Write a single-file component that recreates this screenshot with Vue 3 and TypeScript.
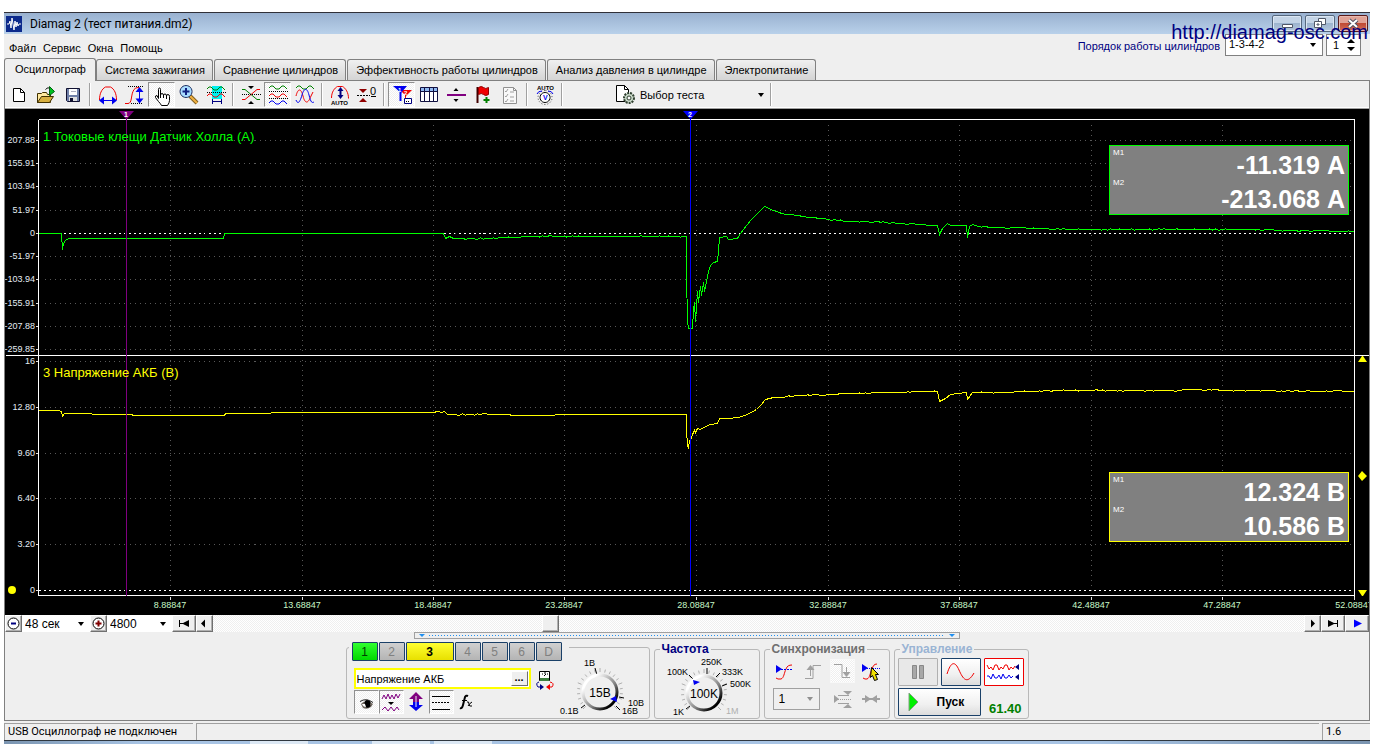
<script setup lang="ts">
import { h, ref } from 'vue'

interface Shape {
  d?: string
  s?: string
  f?: string
  w?: number
  dash?: string
  t?: string
  x?: number
  y?: number
  size?: number
}
interface Tool {
  name: string
  icon: Shape[]
  pressed?: boolean
}

const line = (d: string, s: string, dash?: string, w = 1): Shape => ({ d, s, f: 'none', dash, w })
const fill = (d: string, f: string, s = 'none'): Shape => ({ d, f, s })
const word = (t: string, x: number, y: number, size: number, f = '#000'): Shape => ({ t, x, y, size, f })

const RED = '#f00000'
const BLUE = '#0000f0'
const GREEN = '#008000'

const wave = (y: number) => `M3 ${y + 1}l2-2h2l3 3h3l3-3h2l3 3`

const fileTools: Tool[] = [
  { name: 'Новый', icon: [fill('M6.5 5.5h7l4 4v9h-11z', '#fff', '#000'), line('M13.5 5.5v4h4', '#000')] },
  {
    name: 'Открыть',
    icon: [
      fill('M3.5 19.5v-9h4l1-1h4l1 2h3v8z', '#ffe9a0', '#403000'),
      fill('M3.5 19.5l4-6h12l-4 6z', '#d8b040', '#403000'),
      line('M11.5 6.5c2-2 3-2 4-1', '#000'),
      fill('M15.5 3.5l5 5-5 4z', '#00c020', '#006010'),
    ],
  },
  {
    name: 'Сохранить',
    icon: [fill('M5.5 5.5h13v13h-12l-1-1z', '#7080a8', '#101030'), fill('M8 6h8v6H8z', '#fff'), fill('M8 14h8v4H8z', '#e0e0e0'), fill('M9 15h3v3H9z', '#101030'), line('M10 8.5h5', '#b0b0c0')],
  },
]
const viewTools: Tool[] = [
  { name: 'Растянуть по горизонтали', icon: [line('M3.5 17c0-6 2-11 6-13h5c4 2 6 7 6 13', RED), line('M5 17.5h14', BLUE), fill('M3 17.5l5-4v8zM21 17.5l-5-4v8z', BLUE)] },
  { name: 'Растянуть по вертикали', icon: [line('M5 3.5h16', '#000', '1 1'), line('M8 20.5h12', '#000', '1 1'), line('M2 20.5h3c4 0 3-8 5-12 1-3 3-4 6-4', RED), line('M16.5 5v14', BLUE), fill('M16.5 4l4 5h-8zM16.5 20.5l4-5h-8z', BLUE)] },
  {
    name: 'Рука',
    pressed: true,
    icon: [fill('M8.5 15.5v-9q0-1.500 1-1.500t1 1.500v6q0-2 1.500-2t1.500 2q0-1.500 1.500-1.500t1.500 2q0-1.500 1.500-1.500t1.500 2v4q0 2-2 5h-6q-1-2-3-4l-3-4q-.5-2 1.500-2z', '#fff', '#000'), line('M10.500 12v3M13.500 12v3M16.500 13v3', '#000')],
  },
  { name: 'Лупа', icon: [line('M13 13l7 7', '#806020', undefined, 4), line('M13 13l7 7', '#f0b040', undefined, 2), fill('M9 2.500a6 6 0 1 0 .1 0z', '#a8dcff', '#203060'), line('M9 5v7M5.500 8.500h7', '#102080', undefined, 2)] },
  {
    name: 'Интервал',
    icon: [fill('M8 3h10v13H8z', '#00f0f0'), line(wave(5), GREEN), line('M3 9.500h19', '#000', '1 1'), line(wave(12), RED), line('M8.500 16v5M17.500 16v5M8.500 18.500h9', '#000080')],
  },
]
const traceTools: Tool[] = [
  { name: 'Совместить', icon: [fill('M9 3h6l-3 3zM9 21h6l-3-3z', '#000'), line('M3 6.500h3l12 10h3', GREEN), line('M3 16.500h3l12-10h3', RED), line('M3 11.500h19', '#000', '1 1')] },
  {
    name: 'Разделить',
    pressed: true,
    icon: [line(wave(4), GREEN), line('M3 8.500h19', '#000', '1 1'), line(wave(12), RED), line('M3 15.500h19', '#000', '1 1'), line(wave(19), BLUE)],
  },
  { name: 'Наложить', icon: [line(wave(4), GREEN), line('M3 13c2-8 5-8 7 0s5 8 8 0l2-4', RED), line('M3 17c2 5 4 2 6-5s5-8 7 0 3 8 5 7', BLUE)] },
]
const autoTools: Tool[] = [
  { name: 'Автомасштаб', icon: [line('M3.500 15c0-6 3-10 6-11.500h5c3 1.500 6 6 6 12', RED), line('M12.500 6v8', '#000080', undefined, 2), fill('M12.500 4l3 4h-6zM12.500 16l3-4h-6z', '#000080'), word('AUTO', 3, 22, 6)] },
  { name: 'Обнуление', icon: [fill('M4 6h8l-4 4zM4 19h8l-4-4z', '#900000'), line('M2 12.500h13', '#000', '2 1'), word('0', 15, 12, 11), line('M16 13.500h5', '#000')] },
]
const markerTools: Tool[] = [
  {
    name: 'Маркеры',
    pressed: true,
    icon: [fill('M10 7h12l-6 6z', RED), line('M15.500 12v8', RED), fill('M3 3h14l-6 7z', BLUE), line('M10.500 9v9', BLUE, undefined, 2), word('1', 8, 9, 6, '#fff'), word('2', 14, 12, 6, '#fff'), fill('M14.500 15.500h7v5h-7z', '#fff', '#000080'), line('M16 18.500h4', '#000', '1 1')],
  },
  { name: 'Таблица', icon: [fill('M3.500 4.500h17v14h-17z', '#fff', '#101040'), fill('M4 5h16v3H4z', '#90b8f0'), line('M3.500 8.500h17M7.500 5v13M12.500 5v13M16.500 5v13', '#101040')] },
  { name: 'Разделитель', icon: [line('M3 12h19', '#800080', undefined, 2), fill('M9.500 8h5l-2.500-3zM9.500 16h5l-2.500 3z', '#000')] },
  { name: 'Флаг', icon: [line('M6.500 4v16', '#400000', undefined, 2), fill('M7.500 4.500q3-2 5 0t5 0v7q-3 2-5 0t-5 0z', RED, '#900000'), line('M15.500 14v6M12.500 17h6', GREEN, undefined, 2)] },
  { name: 'Протокол', icon: [fill('M5.500 4.500h10l3 3v13h-13z', '#f8f8f8', '#909090'), line('M15.500 4.500v3h3', '#909090'), line('M7 8l1 1 2-3M7 13l1 1 2-3M7 18l1 1 2-3M12 9h4M12 14h4M12 18h4', '#a0a0a0')] },
]
const voltTools: Tool[] = [
  { name: 'Авто напряжение', icon: [word('AUTO', 4, 7, 6), fill('M12 9.500a5 5 0 1 0 .1 0z', '#fff', '#000'), line('M12 7.500a7 7 0 1 0 .1 0z', '#404040', '1 2'), line('M4 11q1-3 5-3M20 11q-1-3-5-3', BLUE), word('V', 10, 17, 7, BLUE)] },
]
const toolGroups: Tool[][] = [fileTools, viewTools, traceTools, autoTools, markerTools, voltTools]

const tabs = ['Осциллограф', 'Система зажигания', 'Сравнение цилиндров', 'Эффективность работы цилиндров', 'Анализ давления в цилиндре', 'Электропитание']
const activeTab = ref('Осциллограф')

const xTicks = [170, 302, 433, 564, 696, 828, 959, 1091, 1222, 1354].map((x, i) => ({
  x,
  label: (8.88847 + 4.8 * i).toFixed(5),
}))
const currentTicks = [140, 163, 186, 210, 233, 256, 279, 303, 326, 349].map((y, i) => ({
  y,
  label: i === 4 ? '0' : (51.97 * (4 - i)).toFixed(2),
}))
const voltageTicks = [361, 407, 453, 498, 544, 590].map((y, i) => ({
  y,
  label: i === 0 ? '16' : i === 5 ? '0' : (16 - 3.2 * i).toFixed(2),
}))
const yTicks = [...currentTicks, ...voltageTicks]

/* Fills long spans with one-pixel sampling noise, as a digitised signal shows. */
function sampled(source: number[][], noisyFrom: number[][]): string {
  const out: string[] = []
  let seed = 7
  source.forEach(([x, y], i) => {
    out.push(`${x},${y}`)
    const next = source[i + 1]
    if (!next) return
    if (!noisyFrom.some(([a, b]) => x >= a && next[0] <= b)) return
    for (let px = x + 3; px < next[0] - 1; px += 3) {
      seed = (seed * 1103515245 + 12345) % 2147483648
      const base = y + ((next[1] - y) * (px - x)) / (next[0] - x)
      out.push(`${px},${(base + (seed / 2147483648 - 0.5) * 1.4).toFixed(1)}`)
    }
  })
  return out.join(' ')
}
const currentTrace = sampled(
  [[38, 233], [61, 233], [62, 249], [63, 243], [65, 240], [68, 238], [223, 238], [224, 233], [443, 233], [445, 238], [449, 236], [453, 238], [490, 238], [530, 236], [686, 236], [686, 275], [687, 320], [688, 328], [692, 328], [693, 310], [694, 302], [695, 321], [697, 291], [698, 302], [700, 286], [701, 295], [703, 282], [704, 291], [706, 281], [708, 271], [710, 265], [713, 262], [717, 261], [718, 250], [719, 237], [726, 236], [728, 239], [737, 238], [740, 233], [750, 220], [764, 206], [773, 210], [781, 213], [801, 216], [828, 219], [850, 221], [886, 222], [937, 225], [939, 234], [942, 228], [947, 223], [950, 225], [966, 225], [967, 237], [969, 226], [972, 224], [978, 226], [1000, 227], [1080, 229], [1222, 229], [1354, 231]],
  [[449, 686], [773, 937], [978, 1354]],
)
const voltageTrace = sampled(
  [[38, 410], [58, 410], [61, 411], [62, 416], [64, 413], [91, 413], [92, 414], [130, 414], [134, 415], [224, 415], [225, 413], [270, 413], [271, 412], [430, 412], [444, 411], [447, 414], [490, 414], [530, 415], [580, 414], [686, 414], [686, 430], [687, 445], [688, 447], [689, 441], [691, 437], [692, 434], [694, 430], [695, 432], [697, 428], [700, 429], [703, 427], [710, 424], [717, 423], [719, 418], [727, 418], [738, 417], [747, 414], [756, 409], [760, 405], [765, 399], [773, 397], [801, 395], [828, 394], [850, 393], [886, 392], [937, 391], [939, 401], [945, 398], [950, 394], [966, 392], [967, 399], [972, 392], [1000, 392], [1060, 390], [1180, 390], [1187, 389], [1230, 390], [1354, 391]],
  [[430, 490], [773, 937], [972, 1354]],
)

const readouts = [
  { y: 145, color: '#00ff00', m1: '-11.319 А', m2: '-213.068 А' },
  { y: 472, color: '#ffff00', m1: '12.324 В', m2: '10.586 В' },
]

const thumbShare = 30.2
const channels = ['1', '2', '3', '4', '5', '6', 'D']
const channelName = ref('Напряжение АКБ')

const channelTools: Tool[] = [
  { name: 'Показать', pressed: true, icon: [fill('M7 14q3-4 9-2l3 2-2 3q-4 3-8 1z', '#706860'), fill('M11 14.500a3 2 0 1 0 5 0 3 3 0 1 0-5 0z', '#000'), fill('M8 14q1 3 4 3l-1-3z', '#fff'), line('M6 11.500q6-4 13 1', '#202020')] },
  { name: 'Сглаживание', pressed: true, icon: [line('M3 9l2-4 2 4 2-5 2 5 2-4 2 4 2-5 2 4 2-4', '#800080'), fill('M9 12h6l-3 3z', '#000'), line('M3 20l3-3 3 4 3-4 3 4 3-4 2 3', '#800080')] },
  { name: 'Сдвиг', icon: [fill('M12 2l7 7h-4v3H9V9H5z', '#800080'), fill('M12 21l7-6h-4v-3H9v3H5z', BLUE), line('M12 6v11', '#efefef')] },
  { name: 'Линии', pressed: true, icon: [line('M3 6.500h18M3 19.500h18', '#000'), line('M3 12.500h18', '#000', '2 1')] },
  { name: 'Функция', icon: [line('M6 18q2 1 3-3l2-8q1-2 3-1', '#000', undefined, 2), line('M8 10.500h5', '#000'), line('M13 12q2-1 2 2t3 2M18 12q-2 1-4 4', '#000')] },
]
const probeIcon: Shape[] = [fill('M6.500 3.500h10v9h-10z', '#fff', '#000'), line('M9 6h1M11 5h2M14 6h1M11 8l2-2', '#000'), fill('M7 10h9v3H7z', '#408040'), line('M6 14q-4 1-1 5h3', '#000080'), fill('M7 16l4 3-4 3z', '#000080'), line('M17 14q5 1 2 5h-3', RED), fill('M17 16l-4 3 4 3z', RED)]
const syncTools: Tool[] = [
  { name: 'Уровень', icon: [line('M4 19l2 1h3c3-1 3-6 5-10 1-3 3-4 6-4', RED), fill('M4 6l6 4-6 4z', BLUE), line('M9 10.500h12', BLUE, '2 1')] },
  { name: 'Фронт', icon: [line('M4 19.500h8v-13h8', '#a0a0a0'), line('M9.500 9v8', '#a0a0a0'), fill('M9.500 6l4 5h-8z', '#a0a0a0')] },
  { name: 'Спад', pressed: true, icon: [line('M4 5.500h8v13h8', '#a0a0a0'), line('M16.500 8v8', '#a0a0a0'), fill('M16.500 18l4-5h-8z', '#a0a0a0')] },
  { name: 'Ручной уровень', icon: [line('M4 19l2 1h2c3-1 3-6 5-10 1-3 2-5 5-5', RED), fill('M3 5l6 4-6 4z', BLUE), line('M8 9.500h13', BLUE, '1 1'), fill('M12.500 8.500l7 7h-3l2 5-3 1-2-5-2 2z', '#f0e000', '#000')] },
]
const syncExtras: Tool[] = [
  { name: 'Диапазон', icon: [fill('M4 8l5 4-5 4zM13 4h9l-4 4zM13 21h9l-4-4z', '#a0a0a0'), line('M8 8.500h11M8 16.500h11', '#a0a0a0'), line('M8 12.500h13', '#a0a0a0', '1 1')] },
  { name: 'Сжать', icon: [line('M3 12h18', '#a0a0a0', undefined, 2), fill('M6 8l6 4-6 4zM18 8l-6 4 6 4z', '#a0a0a0')] },
]
const sineIcon: Shape[] = [line('M3 14C7 1 11 1 15 10s8 15 15 3', RED)]
const multiIcon: Shape[] = [line('M0 5l2 4 2-2 2 3 2-5h2l2 5 2-3 2 2 2-4h2l2 5 2-3 2 2 2-3', RED), line('M0 16h2l2 3 2-5 2 4h2l2-3 2 4 2-5 2 4h2l2-3 2 3 2-2', BLUE), fill('M28 7l4-3v6zM28 17l4-3v6z', '#000080')]

const ring = (cx: number, cy: number) =>
  Array.from({ length: 21 }, (_, i) => {
    const a = ((135 + i * 13.5) * Math.PI) / 180
    const p = (r: number) => `${(cx + r * Math.cos(a)).toFixed(1)} ${(cy + r * Math.sin(a)).toFixed(1)}`
    return `M${p(20)}L${p(i % 5 ? 23 : 24)}`
  }).join('')

interface Dial {
  title: string
  box: string
  cx: number
  value: string
  pointer: string
  strong: string
  labels: { t: string; x: number; y: number; dim?: boolean }[]
}
const voltageDial: Dial = {
  title: 'Диапазон',
  box: '559 655 88 62',
  cx: 600,
  value: '15В',
  pointer: 'M610 699l6-3 1 6z',
  strong: 'M595 668l2 7M581 708l4-3M616 706l4 4M619 697l5 1',
  labels: [
    { t: '1В', x: 584, y: 666 },
    { t: '0.1В', x: 560, y: 714 },
    { t: '10В', x: 628, y: 706 },
    { t: '16В', x: 622, y: 714 },
  ],
}
const rateDial: Dial = {
  title: 'Частота',
  box: '658 655 95 62',
  cx: 704,
  value: '100K',
  pointer: 'M693 679l1 5 6-3z',
  strong: 'M707 667v6M689 674l4 4M716 676l4-4M722 685l5-2M686 708l4-3',
  labels: [
    { t: '250K', x: 701, y: 664 },
    { t: '100K', x: 667, y: 674 },
    { t: '333K', x: 722, y: 674 },
    { t: '500K', x: 730, y: 686 },
    { t: '1K', x: 673, y: 714 },
    { t: '1M', x: 726, y: 713, dim: true },
  ],
}

const Icon = (props: { shapes: Shape[]; w?: number; h?: number }) =>
  h(
    'svg',
    { width: props.w ?? 24, height: props.h ?? 24, viewBox: `0 0 ${props.w ?? 24} ${props.h ?? 24}`, 'aria-hidden': 'true', class: 'glyph' },
    props.shapes.map((s) =>
      s.t
        ? h('text', { x: s.x, y: s.y, 'font-size': s.size, fill: s.f, 'font-weight': (s.size ?? 0) < 9 ? 700 : 400 }, s.t)
        : h('path', { d: s.d, fill: s.f, stroke: s.s, 'stroke-width': s.w ?? 1, 'stroke-dasharray': s.dash }),
    ),
  )
Icon.props = ['shapes', 'w', 'h']

const DialFace = (props: { dial: Dial }) => {
  const { dial } = props
  const [, , w, hgt] = dial.box.split(' ')
  const id = `knob-${dial.cx}`
  return h('svg', { viewBox: dial.box, width: w, height: hgt, role: 'img', 'aria-label': dial.title, class: 'dial' }, [
    h('defs', [
      h('linearGradient', { id, x1: 0, y1: 0, x2: 1, y2: 1 }, [
        h('stop', { offset: '0.2', 'stop-color': '#ffffff' }),
        h('stop', { offset: '0.6', 'stop-color': '#808080' }),
        h('stop', { offset: '0.85', 'stop-color': '#000000' }),
      ]),
    ]),
    h('path', { d: ring(dial.cx, 692), stroke: '#b0b0b0' }),
    h('path', { d: dial.strong, stroke: '#000' }),
    h('circle', { cx: dial.cx, cy: 692, r: 17, fill: '#efefef', stroke: `url(#${id})`, 'stroke-width': 3 }),
    h('path', { d: dial.pointer, fill: '#0000f0' }),
    h('text', { x: dial.cx, y: 697, 'font-size': 12, 'text-anchor': 'middle' }, dial.value),
    ...dial.labels.map((l) => h('text', { x: l.x, y: l.y, 'font-size': 9, fill: l.dim ? '#b0b0b0' : '#000' }, l.t)),
  ])
}
DialFace.props = ['dial']
</script>

<template>
  <div class="page">
    <div class="window">
      <a class="site" href="http://diamag-osc.com">http://diamag-osc.com</a>
      <header class="title">
        <svg class="logo" width="16" height="16" viewBox="0 0 16 16" aria-hidden="true">
          <path d="M0 0h16v16H0z" fill="#0c2a8c" />
          <path d="M1 8h2l1-3 1 7 1-10 2 12 1-9 1 6 1-5 1 4 1-2h2" fill="none" stroke="#fff" />
        </svg>
        <h1>Diamag 2 (тест питания.dm2)</h1>
        <button class="cap" aria-label="Свернуть"><svg width="28" height="15" viewBox="0 0 28 15"><path d="M9.500 8.500h10v3h-10z" fill="#fff" stroke="#505868" /></svg></button>
        <button class="cap" aria-label="Восстановить"><svg width="28" height="15" viewBox="0 0 28 15"><path d="M12.500 2.500h7v6h-7z" fill="#fff" stroke="#505868" /><path d="M8.500 5.500h7v6h-7zM11 8h2v1h-2z" fill="#fff" stroke="#505868" /></svg></button>
        <button class="cap close" aria-label="Закрыть"><svg width="28" height="15" viewBox="0 0 28 15"><path d="M10 4l8 7M18 4l-8 7" stroke="#505060" stroke-width="4" /><path d="M10 4l8 7M18 4l-8 7" stroke="#fff" stroke-width="2" /></svg></button>
      </header>

      <div class="menubar">
        <nav class="menu">
          <button>Файл</button><button>Сервис</button><button>Окна</button><button>Помощь</button>
        </nav>
        <label class="order" for="order">Порядок работы цилиндров</label>
        <span class="drop orderdrop"><select id="order"><option>1-3-4-2</option></select></span>
        <span class="spin">
          <input id="cyl" type="text" value="1" aria-label="Цилиндр" />
          <svg width="10" height="14" viewBox="0 0 10 14" aria-hidden="true"><path d="M1 5h8L5 1zM1 9h8l-4 4z" /></svg>
        </span>
      </div>

      <div class="tabs" role="tablist">
        <button v-for="t in tabs" :key="t" role="tab" :aria-selected="t === activeTab" :class="{ on: t === activeTab }" @click="activeTab = t">{{ t }}</button>
      </div>

      <main class="body">
        <div class="toolbar">
          <div v-for="(g, i) in toolGroups" :key="i" class="group">
            <button v-for="b in g" :key="b.name" class="tool" :class="{ pressed: b.pressed }" :aria-label="b.name"><Icon :shapes="b.icon" /></button>
          </div>
          <span class="test">
            <svg width="22" height="22" viewBox="0 0 22 22" aria-hidden="true">
              <path d="M2.500 1.500h8l4 4v12h-12z" fill="#fff" stroke="#000" />
              <path d="M10.500 1.500v4h4" fill="none" stroke="#000" />
              <circle cx="15" cy="14" r="5" fill="#c8d8c8" stroke="#304030" stroke-width="2" stroke-dasharray="2 1" />
              <circle cx="15" cy="14" r="2" fill="#fff" stroke="#304030" />
            </svg>
            <span class="drop testdrop"><select aria-label="Выбор теста"><option>Выбор теста</option></select></span>
          </span>
        </div>

        <svg class="scope" viewBox="5 109 1364 506" role="img" aria-label="Осциллограмма">
          <path d="M5 109h1364v506H5z" fill="#000" />
          <g class="crisp" transform="translate(.5 .5)">
            <path v-for="t in yTicks" :key="t.y" :d="`M44 ${t.y}H1352`" stroke="#585858" stroke-dasharray="1 4" />
            <path v-for="t in xTicks.slice(0, 9)" :key="t.x" :d="`M${t.x} 124V594`" stroke="#585858" stroke-dasharray="1 4" />
          </g>
          <g class="crisp" fill="none" transform="translate(.5 .5)">
            <path :d="'M38 233H1354M38 590H1354'" stroke="#fff" stroke-dasharray="2 3" />
            <path :d="yTicks.map((t) => `M35 ${t.y}h3`).join('') + xTicks.map((t) => `M${t.x} 596v3`).join('')" stroke="#e0e0e0" />
            <polyline :points="currentTrace" stroke="#00ff00" />
            <polyline :points="voltageTrace" stroke="#ffff00" />
            <path d="M38 119V595M1354 119V596M38 119H1354M5 355H1369M38 595H1354" stroke="#fff" />
            <path d="M126 112V595" stroke="#800080" />
            <path d="M690 112V595" stroke="#0000ff" />
          </g>
          <path d="M119 111h15l-7 8h-1z" fill="#800080" />
          <path d="M683 111h15l-7 8h-1z" fill="#0000ff" />
          <g class="mark"><text x="124" y="117">1</text><text x="688" y="117">2</text></g>
          <g class="ylab"><text v-for="t in yTicks" :key="t.y" x="35" :y="t.y + 3">{{ t.label }}</text></g>
          <g class="xlab"><text v-for="t in xTicks" :key="t.x" :x="t.x" y="608">{{ t.label }}</text></g>
          <text class="chan" x="43" y="141" fill="#00ff00">1 Токовые клещи Датчик Холла (А)</text>
          <text class="chan" x="43" y="377" fill="#ffff00">3 Напряжение АКБ (В)</text>
          <g v-for="r in readouts" :key="r.y">
            <rect class="crisp" x="1109" :y="r.y" width="240" height="70" :fill="r.color" />
            <rect class="crisp" x="1110" :y="r.y + 1" width="238" height="68" fill="#808080" />
            <text class="m" x="1113" :y="r.y + 10">M1</text>
            <text class="m" x="1113" :y="r.y + 40">M2</text>
            <text class="val" x="1345" :y="r.y + 29">{{ r.m1 }}</text>
            <text class="val" x="1345" :y="r.y + 63">{{ r.m2 }}</text>
          </g>
          <path d="M1358 362h9l-4-6h-1zM1362 471l5 5-5 5-4-5zM1358 590h9l-4 6h-1z" fill="#ffff00" />
          <circle cx="12" cy="590" r="4" fill="#ffff00" />
        </svg>

        <div class="scroll">
          <button class="sq" aria-label="Уменьшить"><svg width="15" height="15" viewBox="0 0 15 15"><circle cx="7.500" cy="7.500" r="5.500" fill="#fff" stroke="#000" /><path d="M5 7.500h5" stroke="#000080" stroke-width="2" /></svg></button>
          <span class="drop time"><select aria-label="Время"><option>48 сек</option></select></span>
          <button class="sq" aria-label="Увеличить"><svg width="15" height="15" viewBox="0 0 15 15"><circle cx="7.500" cy="7.500" r="5.500" fill="#fff" stroke="#000" /><path d="M4.500 7.500h6M7.500 4.500v6" stroke="#800000" stroke-width="2" /></svg></button>
          <span class="drop count"><select aria-label="Точек"><option>4800</option></select></span>
          <button class="wide" aria-label="В начало"><svg width="21" height="15" viewBox="0 0 21 15"><path d="M5 4h1v7H5zM6 7h3l6-3v7l-6-3H6z" /></svg></button>
          <button class="sq" aria-label="Назад"><svg width="15" height="15" viewBox="0 0 15 15"><path d="M4 7.500l4-4v8z" /></svg></button>
          <div class="track"><div class="thumb" :style="{ marginLeft: thumbShare + '%' }"></div></div>
          <button class="sq" aria-label="Вперёд"><svg width="15" height="15" viewBox="0 0 15 15"><path d="M10 7.500l-4-4v8z" /></svg></button>
          <button class="wide" aria-label="В конец"><svg width="21" height="15" viewBox="0 0 21 15"><path d="M14 4h1v7h-1zM14 8h-3l-6 3V4l6 3h3z" /></svg></button>
          <button class="wide" aria-label="Воспроизвести"><svg width="21" height="15" viewBox="0 0 21 15"><path d="M15 7.500l-8-4v8z" fill="#0000ff" /></svg></button>
        </div>

        <div class="splitter"><i></i><b></b><i></i></div>

        <div class="panels">
          <section class="panel channel" aria-label="Канал">
            <div class="chans">
              <button v-for="c in channels" :key="c" :class="{ green: c === '1', yellow: c === '3' }">{{ c }}</button>
            </div>
            <div class="left">
              <div class="namerow">
                <span class="namebox"><input id="name" v-model="channelName" type="text" aria-label="Имя канала" /><button aria-label="Выбрать">...</button></span>
                <Icon :shapes="probeIcon" />
              </div>
              <div class="group">
                <button v-for="b in channelTools" :key="b.name" class="tool small" :class="{ pressed: b.pressed }" :aria-label="b.name"><Icon :shapes="b.icon" /></button>
              </div>
            </div>
            <DialFace :dial="voltageDial" class="vdial" />
          </section>

          <fieldset class="panel rate"><legend>Частота</legend><DialFace :dial="rateDial" /></fieldset>

          <fieldset class="panel sync">
            <legend>Синхронизация</legend>
            <div class="syncrow"><button v-for="b in syncTools" :key="b.name" class="tool" :class="{ pressed: b.pressed }" :aria-label="b.name"><Icon :shapes="b.icon" /></button></div>
            <div class="syncrow second">
              <span class="drop one"><select aria-label="Канал синхронизации"><option>1</option></select></span>
              <button v-for="b in syncExtras" :key="b.name" class="tool" :aria-label="b.name"><Icon :shapes="b.icon" /></button>
            </div>
          </fieldset>

          <fieldset class="panel control">
            <legend>Управление</legend>
            <div class="ctl">
              <button class="big off" aria-label="Пауза"><svg width="14" height="16" viewBox="0 0 14 16"><path d="M1.500 1.500h4v13h-4zM8.500 1.500h4v13h-4z" fill="#a8a8a8" stroke="#888" /></svg></button>
              <button class="big" aria-label="Синус"><Icon :shapes="sineIcon" :w="33" /></button>
              <button class="big red" aria-label="Все каналы"><Icon :shapes="multiIcon" :w="33" /></button>
              <button class="start"><svg width="11" height="20" viewBox="0 0 11 20" aria-hidden="true"><path d="M1 1l9 9-9 9z" fill="#00f000" stroke="#80a080" /></svg>Пуск</button>
              <output>61.40</output>
            </div>
          </fieldset>
        </div>
      </main>

      <footer class="status"><span class="s1">USB Осциллограф не подключен</span><span class="s2"></span><span class="s3">1.6</span></footer>
      <div class="task"><span></span><span></span><span></span></div>
    </div>
  </div>
</template>

<style>
body { margin: 0; background: #fff; }
</style>

<style scoped>
.page { box-sizing: border-box; padding: 12px 12px 0 4px; font: 11px/14px "Liberation Sans", Arial, sans-serif; color: #000; }
.window { position: relative; background: #efefef; border-top: 1px solid #303038; }
button, input, select { font: inherit; color: inherit; margin: 0; padding: 0; border: 0; border-radius: 0; background: none; box-sizing: border-box; }
.glyph, .dial { display: block; overflow: visible; }
.site { position: absolute; top: 7px; right: 2px; z-index: 2; font-size: 20px; line-height: 24px; color: #000080; text-decoration: none; }
.title { display: flex; align-items: center; gap: 3px; height: 21px; padding: 0 2px; background: linear-gradient(#99b1d0, #b9d1ea); }
.title h1 { flex: 1; margin: 0; padding-left: 5px; font: 12px/18px Roboto, "Open Sans", sans-serif; }
.cap { width: 30px; height: 17px; border: 1px solid #56687e; border-radius: 2px; background: linear-gradient(#c4d4e6 45%, #9db4ce 50%, #b4c8de); box-shadow: inset 0 0 0 1px #dbe6f2; }
.cap svg { display: block; }
.cap.close { border-color: #5a1a1a; background: linear-gradient(#e0a296 45%, #c04a34 50%, #d0705c); box-shadow: inset 0 0 0 1px #e8b8ae; }
.menubar { display: flex; height: 25px; align-items: flex-start; padding-right: 9px; }
.menu { display: flex; flex: 1; gap: 7px; padding: 7px 5px; }
.order { padding: 5px 5px 0 0; color: #000080; }
.drop { position: relative; display: block; }
.drop select { width: 100%; height: 100%; appearance: none; border-radius: 0; }
.drop::after { content: ""; position: absolute; right: 6px; top: 50%; margin-top: -2px; border: 3px solid transparent; border-top: 4px solid #000; border-bottom: 0; pointer-events: none; }
.orderdrop, .spin { height: 22px; border: 1px solid #808080; background: #fff; box-sizing: border-box; }
.orderdrop { width: 98px; margin-right: 3px; }
.orderdrop select { padding: 0 3px 2px; }
.spin { display: flex; width: 35px; align-items: center; padding: 0 4px 0 6px; }
.spin input { width: 14px; flex: 1; min-width: 0; }
.tabs { display: flex; align-items: flex-end; gap: 1px; height: 22px; border-bottom: 1px solid #808080; box-sizing: border-box; }
.tabs button { height: 21px; padding: 0 7px 0 8px; border: 1px solid #808080; border-bottom: 0; border-radius: 3px 3px 0 0; background: linear-gradient(#f0f0f0, #d4d4d4); white-space: nowrap; }
.tabs button.on { height: 23px; margin: 0 -1px -1px 0; padding: 0 9px 3px 10px; background: #efefef; }
.body { border: 1px solid #808080; border-top: 0; }
.toolbar { display: flex; height: 28px; box-sizing: border-box; padding-top: 1px; border-bottom: 1px solid #a0a0a0; box-shadow: inset 0 -1px #fff; align-items: flex-start; }
.group { display: flex; }
.toolbar .group { padding-right: 8px; background: linear-gradient(90deg, #a0a0a0 1px, #fff 1px) no-repeat right 3px top 1px / 2px 23px; }
.tool { display: flex; width: 27px; height: 25px; align-items: center; justify-content: center; }
.tool.pressed { border: 1px solid; border-color: #909090 #fff #fff #909090; background: repeating-conic-gradient(#fff 0 25%, #efefef 0 50%) 0 0 / 2px 2px; }
.test { display: flex; align-items: center; gap: 4px; width: 206px; height: 25px; padding-left: 48px; box-sizing: border-box; background: linear-gradient(90deg, #a0a0a0 1px, #fff 1px) no-repeat right 0 top 1px / 2px 23px; }
.testdrop { flex: 1; height: 22px; }
.testdrop::after { right: 8px; }
.scope { display: block; width: 100%; height: auto; font-family: "Liberation Sans", Arial, sans-serif; }
.crisp { shape-rendering: crispEdges; }
.ylab { font-size: 9px; text-anchor: end; fill: #e4ecf4; }
.xlab { font-size: 9px; text-anchor: middle; fill: #c8f8c8; }
.mark { font-size: 7px; font-weight: 700; fill: #fff; }
.chan { font-size: 13px; }
.m { font-size: 8px; fill: #fff; }
.val { font-size: 25px; font-weight: 700; text-anchor: end; fill: #fff; }
.scroll { display: flex; height: 17px; }
.scroll button, .thumb { flex: none; display: flex; align-items: center; justify-content: center; height: 17px; box-sizing: border-box; border: 1px solid; border-color: #fff #707070 #707070 #fff; background: #efefef; box-shadow: inset -1px -1px #b0b0b0; }
.scroll .sq, .thumb { width: 17px; }
.scroll .wide { width: 24px; }
.scroll .drop { background: #fff; font-size: 12px; }
.scroll select { padding-left: 3px; }
.time { width: 68px; }
.count { width: 65px; }
.track { flex: 1; background: repeating-conic-gradient(#fff 0 25%, #efefef 0 50%) 0 0 / 2px 2px; }
.splitter { display: flex; width: 40%; height: 7px; box-sizing: border-box; margin: 0 auto; padding: 0 4px; border: 1px solid #a0a0a0; align-items: center; gap: 4px; }
.splitter i { border: 3px solid transparent; border-top: 3px solid #2090f0; border-bottom: 0; }
.splitter b { flex: 1; height: 1px; background: repeating-linear-gradient(90deg, #2090f0 0 1px, transparent 1px 3px); }
.panels { display: flex; justify-content: center; gap: 4px; padding-top: 4px; height: 81px; box-sizing: border-box; }
.panel { position: relative; box-sizing: border-box; min-width: 0; margin: 0; padding: 0; border: 1px solid #b8b8b8; border-radius: 3px; height: 76px; }
.panel legend { margin-left: 5px; padding: 0 2px; font-size: 12px; line-height: 12px; font-weight: 700; color: #000080; height: 12px; }
.channel { display: grid; grid-template-columns: 212px 1fr; width: 304px; height: 72px; margin-top: 4px; }
.chans { position: absolute; top: -6px; left: 2px; display: flex; gap: 1px; padding: 0 7px 0 3px; background: #efefef; }
.chans button { width: 26px; height: 19px; border: 1px solid #1a4068; border-radius: 1px; background: linear-gradient(#d0d0d0, #b4b4b4); color: #808080; font-size: 12px; }
.chans .green { background: linear-gradient(#30ff30, #00d800); color: #004000; }
.chans .yellow { width: 48px; background: linear-gradient(#ffff30, #e8e000); color: #000; font-weight: 700; }
.left { padding: 20px 0 0 7px; }
.namerow { display: flex; gap: 2px; height: 22px; }
.namebox { display: flex; width: 177px; height: 21px; box-sizing: border-box; border: 1px solid #ffff00; box-shadow: inset 0 0 0 1px #ffff00; background: #fff; padding: 2px; }
.namebox input { flex: 1; min-width: 0; font-size: 11px; outline: 0; }
.namebox button { width: 17px; line-height: 8px; font-weight: 700; background: #efefef; border: 1px solid; border-color: #fff #707070 #707070 #fff; padding-bottom: 4px; }
.tool.small { width: 25px; height: 24px; }
.vdial { margin-top: 7px; }
.rate { width: 106px; }
.rate svg { margin: 1px 0 0 3px; }
.sync { width: 126px; }
.sync legend { color: #707070; }
.syncrow { display: flex; gap: 4px; padding: 4px 0 0 7px; }
.syncrow .tool { width: 25px; height: 24px; }
.syncrow .tool.pressed { border-color: #f8f8f8; }
.syncrow.second { gap: 4px; padding: 4px 0 0 8px; align-items: center; }
.one { width: 47px; height: 22px; margin-right: 6px; border: 1px solid #a0a0a0; box-sizing: border-box; font-size: 12px; }
.one select { padding-left: 5px; }
.one::after { border-top-color: #909090; }
.control { width: 135px; }
.control legend { color: #9ab4d4; }
.ctl { display: grid; grid-template-columns: repeat(3, 40px); gap: 2px 3px; padding: 3px 3px 0; }
.big, .start { display: flex; align-items: center; justify-content: center; height: 28px; border: 1px solid #1a4068; border-radius: 1px; background: linear-gradient(#fff, #f0f0f0 60%, #dcdcdc); overflow: hidden; }
.big.off { border-color: #b0b0b0; background: #e8e8e8; }
.big.red { border-color: #f00000; background: #fff; }
.start { grid-column: span 2; justify-content: flex-start; gap: 18px; padding-left: 9px; font-size: 12px; font-weight: 700; }
.ctl output { align-self: end; padding-right: 2px; font-size: 13px; font-weight: 700; color: #008000; text-align: right; }
.status { display: flex; gap: 3px; margin-top: 2px; height: 17px; font: 11px/16px Roboto, "Noto Sans", sans-serif; }
.status span { border-top: 1px solid #a0a0a0; border-left: 1px solid #a0a0a0; box-sizing: border-box; padding-left: 3px; white-space: nowrap; }
.s1 { width: 189px; }
.s2 { flex: 1; }
.s3 { width: 48px; }
.task { display: flex; gap: 4px; height: 4px; box-sizing: border-box; padding-left: 246px; border-top: 1px solid #303840; background: linear-gradient(90deg, #7a94b0, #a8c4e4 10%, #a8c4e4 80%, #7a94b0); }
.task span { width: 58px; background: #dce8f4; }
.task span:nth-child(2) { margin-left: 60px; }
</style>
